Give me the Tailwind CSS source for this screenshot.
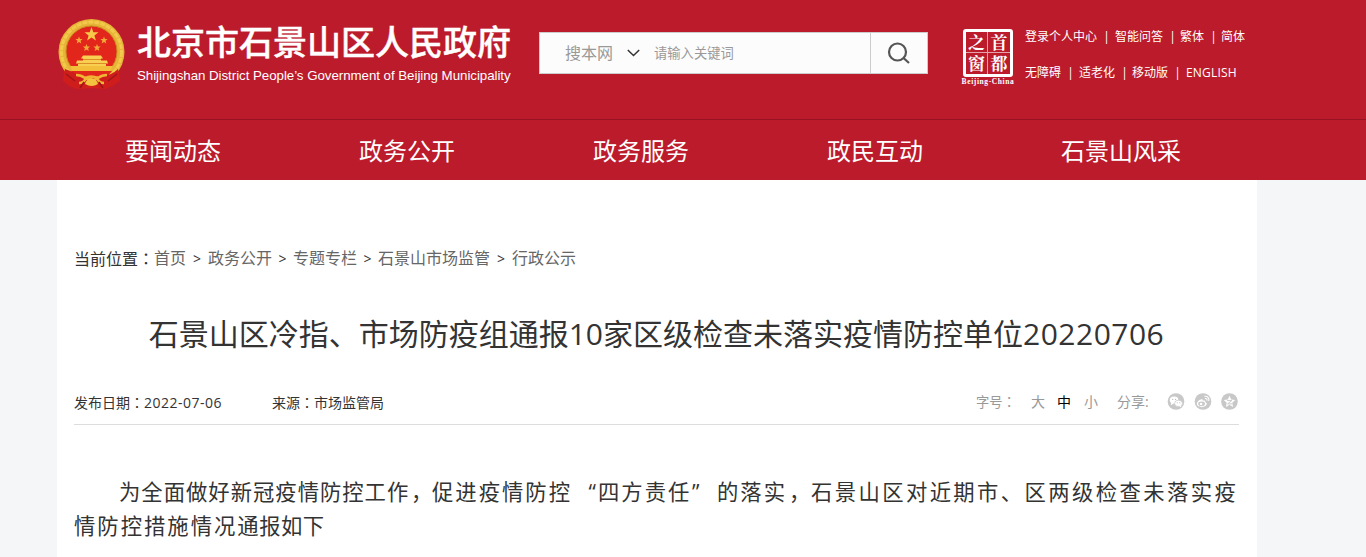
<!DOCTYPE html>
<html lang="zh-CN">
<head>
  <meta charset="UTF-8" />
  <meta name="viewport" content="width=device-width, initial-scale=1.0"/>
  <title>北京市石景山区人民政府</title>
  <script src="https://cdn.jsdelivr.net/npm/@tailwindcss/browser@4"></script>
</head>
<body class="bg-[#f4f6f8] h-[557px] overflow-hidden font-['Open_Sans','Noto_Sans_CJK_SC',sans-serif] whitespace-nowrap">
  <header class="bg-[#bc1b2c] text-white">
    <div class="ml-[57px] w-[1200px] h-[119px] flex items-start">
      <!-- national emblem -->
      <svg class="mt-[18px] w-[69px] h-[73px] shrink-0" viewBox="0 0 69 73">
        <path d="M8 50 L6 63 L13 68 L20 71 L34 70 L48 71 L57 67 L63 62 L61 50Z" fill="#d3201c"/>
        <circle cx="34.5" cy="34" r="33" fill="#e6b437"/>
        <circle cx="34.5" cy="34" r="30" fill="none" stroke="#f3c94c" stroke-width="3" stroke-dasharray="5 1"/>
        <circle cx="34.5" cy="33.500" r="25.500" fill="#e3261c" stroke="#c98a20"/>
        <path d="M34.5 9 L36.3 14.200 L41.500 14.200 L37.400 17.500 L38.900 22.500 L34.500 19.500 L30.100 22.500 L31.600 17.500 L27.500 14.200 L32.700 14.200Z" fill="#f9c94a"/>
        <g fill="#f0a838">
          <path d="M22 18.500l1 2.500 2.600.1-2 1.700.7 2.600-2.300-1.500-2.300 1.500.7-2.600-2-1.700 2.600-.1z"/>
          <path d="M47 18.500l1 2.500 2.600.1-2 1.700.7 2.600-2.300-1.500-2.300 1.500.7-2.600-2-1.700 2.600-.1z"/>
          <path d="M29.500 26l1 2.500 2.600.1-2 1.700.7 2.600-2.300-1.500-2.300 1.500.7-2.600-2-1.700 2.600-.1z"/>
          <path d="M40 26l1 2.500 2.600.1-2 1.700.7 2.600-2.300-1.500-2.300 1.500.7-2.600-2-1.700 2.600-.1z"/>
        </g>
        <path d="M26 37.500h18l2 3h-2v2h6l1 3h-2v3H21v-3h-2l1-3h6v-2h-2z" fill="#f8cf50"/>
        <path d="M26 41.500h18M21 45.500h28" stroke="#dc8b27"/>
        <path d="M13 48h43l-3 5H16z" fill="#f3be3a"/>
        <path d="M14 53h41l-5 6H19z" fill="#e3261c"/>
        <path d="M8 51q7 2 15 7t11 3 12-3 15-7l2 11-8 6-9 3-12-4-12 4-10-3-6-6z" fill="#cf1d1b"/>
        <path d="M19 57q5 0 9 3 6-3 13 0 4-3 9-3M22 65q5 0 7-5 6 5 11 0 2 5 7 5" fill="none" stroke="#f0b534" stroke-width="2.500"/>
        <path d="M28 66q1-5 6.500-6 5.500 1 6.500 6-6 4-13 0z" fill="#f3c23e"/>
        <path d="M9 56l9 7M60 56l-9 7M23 70l4-6M46 70l-4-6" stroke="#9e1519" stroke-width="1.500"/>
      </svg>
      <div class="ml-[11px] w-[402px] shrink-0">
        <div class="mt-[20px] h-[43px] leading-[42px] text-[34px] font-medium font-['Noto_Sans_CJK_SC'] [-webkit-text-stroke:0.4px_white]">北京市石景山区人民政府</div>
        <div class="mt-px h-6 leading-6 text-[13.333px] tracking-[-0.05px] font-['Liberation_Sans']">Shijingshan District People’s Government of Beijing Municipality</div>
      </div>
      <!-- search box -->
      <div class="mt-8 w-[389px] h-[42px] shrink-0 flex items-center bg-[#fcfcfc] border border-[#ccc] text-[#999]">
        <span class="pl-[25px] text-base">搜本网</span>
        <svg class="ml-[14px] w-[13px] h-2" viewBox="0 0 13 8" fill="none" stroke="#333" stroke-width="1.5"><path d="M.8 1l5.700 5.500L12.200 1"/></svg>
        <span class="ml-[14px] pt-[2px] text-[13.3px]">请输入关键词</span>
        <span class="ml-auto w-[57px] h-10 border-l border-[#ccc] flex items-center justify-center">
          <svg class="w-6 h-6" viewBox="0 0 24 24" fill="none" stroke="#555" stroke-width="2.200"><circle cx="10.500" cy="11" r="8.500"/><path d="M16.500 17l5.500 5"/></svg>
        </span>
      </div>
      <div class="ml-[32px] mt-[29px] w-[56px] shrink-0 flex flex-col items-center">
        <div class="w-[50px] h-[48px] border-3 border-white rounded-[3px] grid grid-cols-2 grid-rows-2 text-[17px] leading-[20px] text-center font-bold font-['Noto_Serif_CJK_SC','Noto_Sans_CJK_SC']">
          <span class="border-r border-b border-white/60">之</span><span class="border-b border-white/60">首</span>
          <span class="border-r border-white/60">窗</span><span>都</span>
        </div>
        <div class="h-[9px] leading-[9px] text-[7.500px] font-bold tracking-[0.6px] font-['Liberation_Serif']">Beijing-China</div>
      </div>
      <div class="ml-[9px] mt-[19px] text-xs leading-9">
        <div class="flex"><span class="w-[90px]">登录个人中心&nbsp; |</span><span class="w-[65px]">智能问答&nbsp; |</span><span class="w-[41px]">繁体&nbsp; |</span><span>简体</span></div>
        <div class="flex"><span class="w-[54px]">无障碍&nbsp; |</span><span class="w-[53px]">适老化&nbsp; |</span><span class="w-[54px]">移动版&nbsp; |</span><span class="tracking-[0.200px]">ENGLISH</span></div>
      </div>
    </div>
    <nav class="h-[61px] border-t border-[#981321]">
      <ul class="ml-[57px] w-[1170px] grid grid-cols-5 text-2xl leading-[61px]">
        <li class="pl-[68px]">要闻动态</li><li class="pl-[68px]">政务公开</li><li class="pl-[68px]">政务服务</li><li class="pl-[68px]">政民互动</li><li class="pl-[68px]">石景山风采</li>
      </ul>
    </nav>
  </header>

  <main class="ml-[57px] w-[1200px] h-[377px] bg-white pl-[17px] pr-[18px] text-[#333]">
    <div class="pt-[66px] flex leading-6 text-base text-[#666]">
      <span class="w-[80px] h-6 text-[#333]">当前位置<span lang="zh-TW" class="font-['Noto_Sans_CJK_TC']">：</span></span>
      <span class="w-[32px]">首页</span><span class="w-[22px] text-center text-[#333] text-sm leading-[26px]">&gt;</span>
      <span class="w-[64px]">政务公开</span><span class="w-[21px] text-center text-[#333] text-sm leading-[26px]">&gt;</span>
      <span class="w-[64px]">专题专栏</span><span class="w-[21px] text-center text-[#333] text-sm leading-[26px]">&gt;</span>
      <span class="w-[112px]">石景山市场监管</span><span class="w-[22px] text-center text-[#333] text-sm leading-[26px]">&gt;</span>
      <span>行政公示</span>
    </div>
    <h1 class="mt-[42px] h-[40px] leading-[40px] text-[30px] text-center">石景山区冷指、市场防疫组通报10家区级检查未落实疫情防控单位<span class="tracking-[0.5px]">20220706</span></h1>
    <div class="mt-[25px] h-[46px] leading-[46px] border-b border-[#ddd] flex text-sm">
      <span class="w-[198px]">发布日期<span lang="zh-TW" class="font-['Noto_Sans_CJK_TC']">：</span><span class="tracking-[0.5px]">2022-07-06</span></span>
      <span>来源<span lang="zh-TW" class="font-['Noto_Sans_CJK_TC']">：</span>市场监管局</span>
      <div class="ml-auto flex items-center text-[#999]">
        <span class="w-[55px] text-[13.3px]">字号<span lang="zh-TW" class="font-['Noto_Sans_CJK_TC']">：</span></span><span class="w-[26px]">大</span><span class="w-[27px] text-black">中</span><span class="w-[33px]">小</span>
        <span class="w-[50px]">分享:</span>
        <svg class="w-[18px] h-[17px]" viewBox="0 0 18 18">
          <circle cx="9" cy="9" r="8.800" fill="#c8c8c8"/><ellipse cx="7" cy="7.500" rx="4.600" ry="3.800" fill="#fff"/><path d="M4 10l-.5 3 3-2" fill="#fff"/>
          <ellipse cx="11.700" cy="11" rx="4.200" ry="3.400" fill="#fff" stroke="#c8c8c8" stroke-width=".8"/><path d="M12 13.500l2.500 1.500-.3-2.500" fill="#fff"/>
          <g fill="#b8b8b8"><circle cx="5.500" cy="6.700" r=".7"/><circle cx="8.500" cy="6.700" r=".7"/><circle cx="10.300" cy="10.300" r=".6"/><circle cx="13" cy="10.300" r=".6"/></g>
        </svg>
        <svg class="ml-[9px] w-[18px] h-[17px]" viewBox="0 0 18 18" fill="none" stroke="#fff">
          <circle cx="9" cy="9" r="8.800" fill="#c8c8c8" stroke="none"/>
          <path d="M8 6.500c-2.500 0-5.500 2.500-5.500 5s3 3.500 5.300 3.500c3 0 5.200-1.500 5.200-3.500 0-1-.8-1.700-1.700-2 .4-1.600-1-2-2.600-1.400.2-1-.1-1.600-.7-1.600z" fill="#fff" stroke="none"/>
          <ellipse cx="7.500" cy="11.500" rx="3.600" ry="2.500" fill="#c8c8c8" stroke="none"/><circle cx="7" cy="11.700" r="1.400" fill="#fff" stroke="none"/>
          <path d="M10.500 3.500c3.300-.6 5.500 2 4.500 5M11 5.800c1.700-.2 2.600.8 2.200 2.300" stroke-width="1.200"/>
        </svg>
        <svg class="ml-[9px] mr-px w-[17px] h-[17px]" viewBox="0 0 18 18">
          <circle cx="9" cy="9" r="8.800" fill="#c8c8c8"/><path d="M9 2.800l1.800 4 4.300.5-3.200 3 .9 4.400L9 12.500l-3.800 2.200.9-4.400-3.200-3 4.300-.5z" fill="#fff"/><path d="M6.500 8h5l-4.500 3.500h5" fill="none" stroke="#c8c8c8"/>
        </svg>
      </div>
    </div>
    <div class="mt-[50px] text-[21.33px] leading-[34px]">
      <p class="flex pl-[45px]"><span class="w-[291px] tracking-[1px]">为全面做好新冠疫情防控工作</span><span class="w-[22px] pl-px">，</span><span class="w-[140px] tracking-[2px]">促进疫情防控</span><span class="w-[26px] text-right pr-[2px]">“</span><span class="w-[94px] tracking-[2px]">四方责任</span><span class="w-[25px]">”</span><span class="w-[71px] tracking-[2px]">的落实</span><span class="w-[23px] pl-px">，</span><span class="tracking-[2.400px]">石景山区对近期市、区两级检查未落实疫</span></p>
      <p><span class="tracking-[2px]">情防控措施情况</span><span class="tracking-[0.500px]">通报如下</span></p>
    </div>
  </main>
</body>
</html>
